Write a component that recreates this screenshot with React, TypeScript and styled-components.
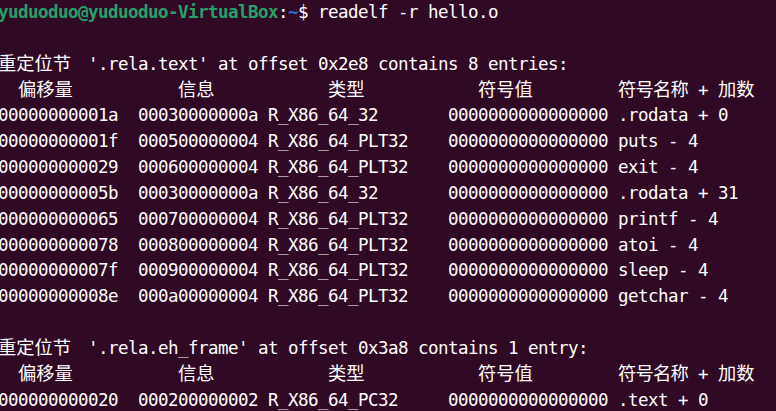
import React from 'react';
import styled, { createGlobalStyle } from 'styled-components';

const Global = createGlobalStyle`
  html, body {
    margin: 0;
    padding: 0;
    background: #300a24;
  }
  body {
    overflow: hidden;
  }
`;

const Terminal = styled.div`
  width: 776px;
  height: 411px;
  overflow: hidden;
  background: #300a24;
  color: #ffffff;
  font-family: "DejaVu Sans Mono", "Liberation Mono", monospace;
  font-size: 17.5px;
  letter-spacing: -0.536px;
`;

const Screen = styled.div`
  display: flex;
  flex-direction: column;
  margin-left: -2px;
`;

const Line = styled.div`
  height: 25.85px;
  line-height: 25.85px;
  white-space: pre;
`;

const Grid = styled(Line)`
  display: grid;
  grid-template-columns: 140px 130px 180px 170px auto;
`;

const Cell = styled.span<{ $indent?: number }>`
  padding-left: ${(p) => (p.$indent ?? 0) * 10}px;
  white-space: pre;
`;

const Cjk = styled.span<{ $cells: number; $tight?: boolean }>`
  display: inline-block;
  width: ${(p) => p.$cells * 10}px;
  font-family: "Noto Sans CJK SC", "Noto Sans CJK JP", sans-serif;
  font-size: 18.3px;
  line-height: 1;
  letter-spacing: ${(p) => (p.$tight ? '-0.8px' : '0')};
  white-space: nowrap;
  vertical-align: baseline;
`;

const User = styled.span`
  color: #26a269;
  font-weight: bold;
`;

const Path = styled.span`
  color: #2a6fc9;
  font-weight: bold;
`;

type Row = [string, string, string, string, string];

const textRows: Row[] = [
  ['00000000001a', '00030000000a', 'R_X86_64_32', '0000000000000000', '.rodata + 0'],
  ['00000000001f', '000500000004', 'R_X86_64_PLT32', '0000000000000000', 'puts - 4'],
  ['000000000029', '000600000004', 'R_X86_64_PLT32', '0000000000000000', 'exit - 4'],
  ['00000000005b', '00030000000a', 'R_X86_64_32', '0000000000000000', '.rodata + 31'],
  ['000000000065', '000700000004', 'R_X86_64_PLT32', '0000000000000000', 'printf - 4'],
  ['000000000078', '000800000004', 'R_X86_64_PLT32', '0000000000000000', 'atoi - 4'],
  ['00000000007f', '000900000004', 'R_X86_64_PLT32', '0000000000000000', 'sleep - 4'],
  ['00000000008e', '000a00000004', 'R_X86_64_PLT32', '0000000000000000', 'getchar - 4'],
];

const ehRows: Row[] = [
  ['000000000020', '000200000002', 'R_X86_64_PC32', '0000000000000000', '.text + 0'],
];

const Header: React.FC = () => (
  <Grid>
    <Cell $indent={2}>
      <Cjk $cells={6}>偏移量</Cjk>
    </Cell>
    <Cell $indent={4}>
      <Cjk $cells={4}>信息</Cjk>
    </Cell>
    <Cell $indent={6}>
      <Cjk $cells={4}>类型</Cjk>
    </Cell>
    <Cell $indent={3}>
      <Cjk $cells={6}>符号值</Cjk>
    </Cell>
    <Cell>
      <Cjk $cells={7} $tight>
        符号名称
      </Cjk>
      {' + '}
      <Cjk $cells={4}>加数</Cjk>
    </Cell>
  </Grid>
);

const Section: React.FC<{ name: string; offset: string; count: string; rows: Row[] }> = ({
  name,
  offset,
  count,
  rows,
}) => (
  <>
    <Line>
      <Cjk $cells={8}>重定位节</Cjk>
      {` '${name}' at offset ${offset} contains ${count}:`}
    </Line>
    <Header />
    {rows.map((r) => (
      <Grid key={r[0]}>
        {r.map((c, i) => (
          <Cell key={i}>{c}</Cell>
        ))}
      </Grid>
    ))}
  </>
);

export default function App() {
  return (
    <>
      <Global />
      <Terminal>
        <Screen>
          <Line>
            <User>yuduoduo@yuduoduo-VirtualBox</User>:<Path>~</Path>$ readelf -r hello.o
          </Line>
          <Line />
          <Section name=".rela.text" offset="0x2e8" count="8 entries" rows={textRows} />
          <Line />
          <Section name=".rela.eh_frame" offset="0x3a8" count="1 entry" rows={ehRows} />
        </Screen>
      </Terminal>
    </>
  );
}
